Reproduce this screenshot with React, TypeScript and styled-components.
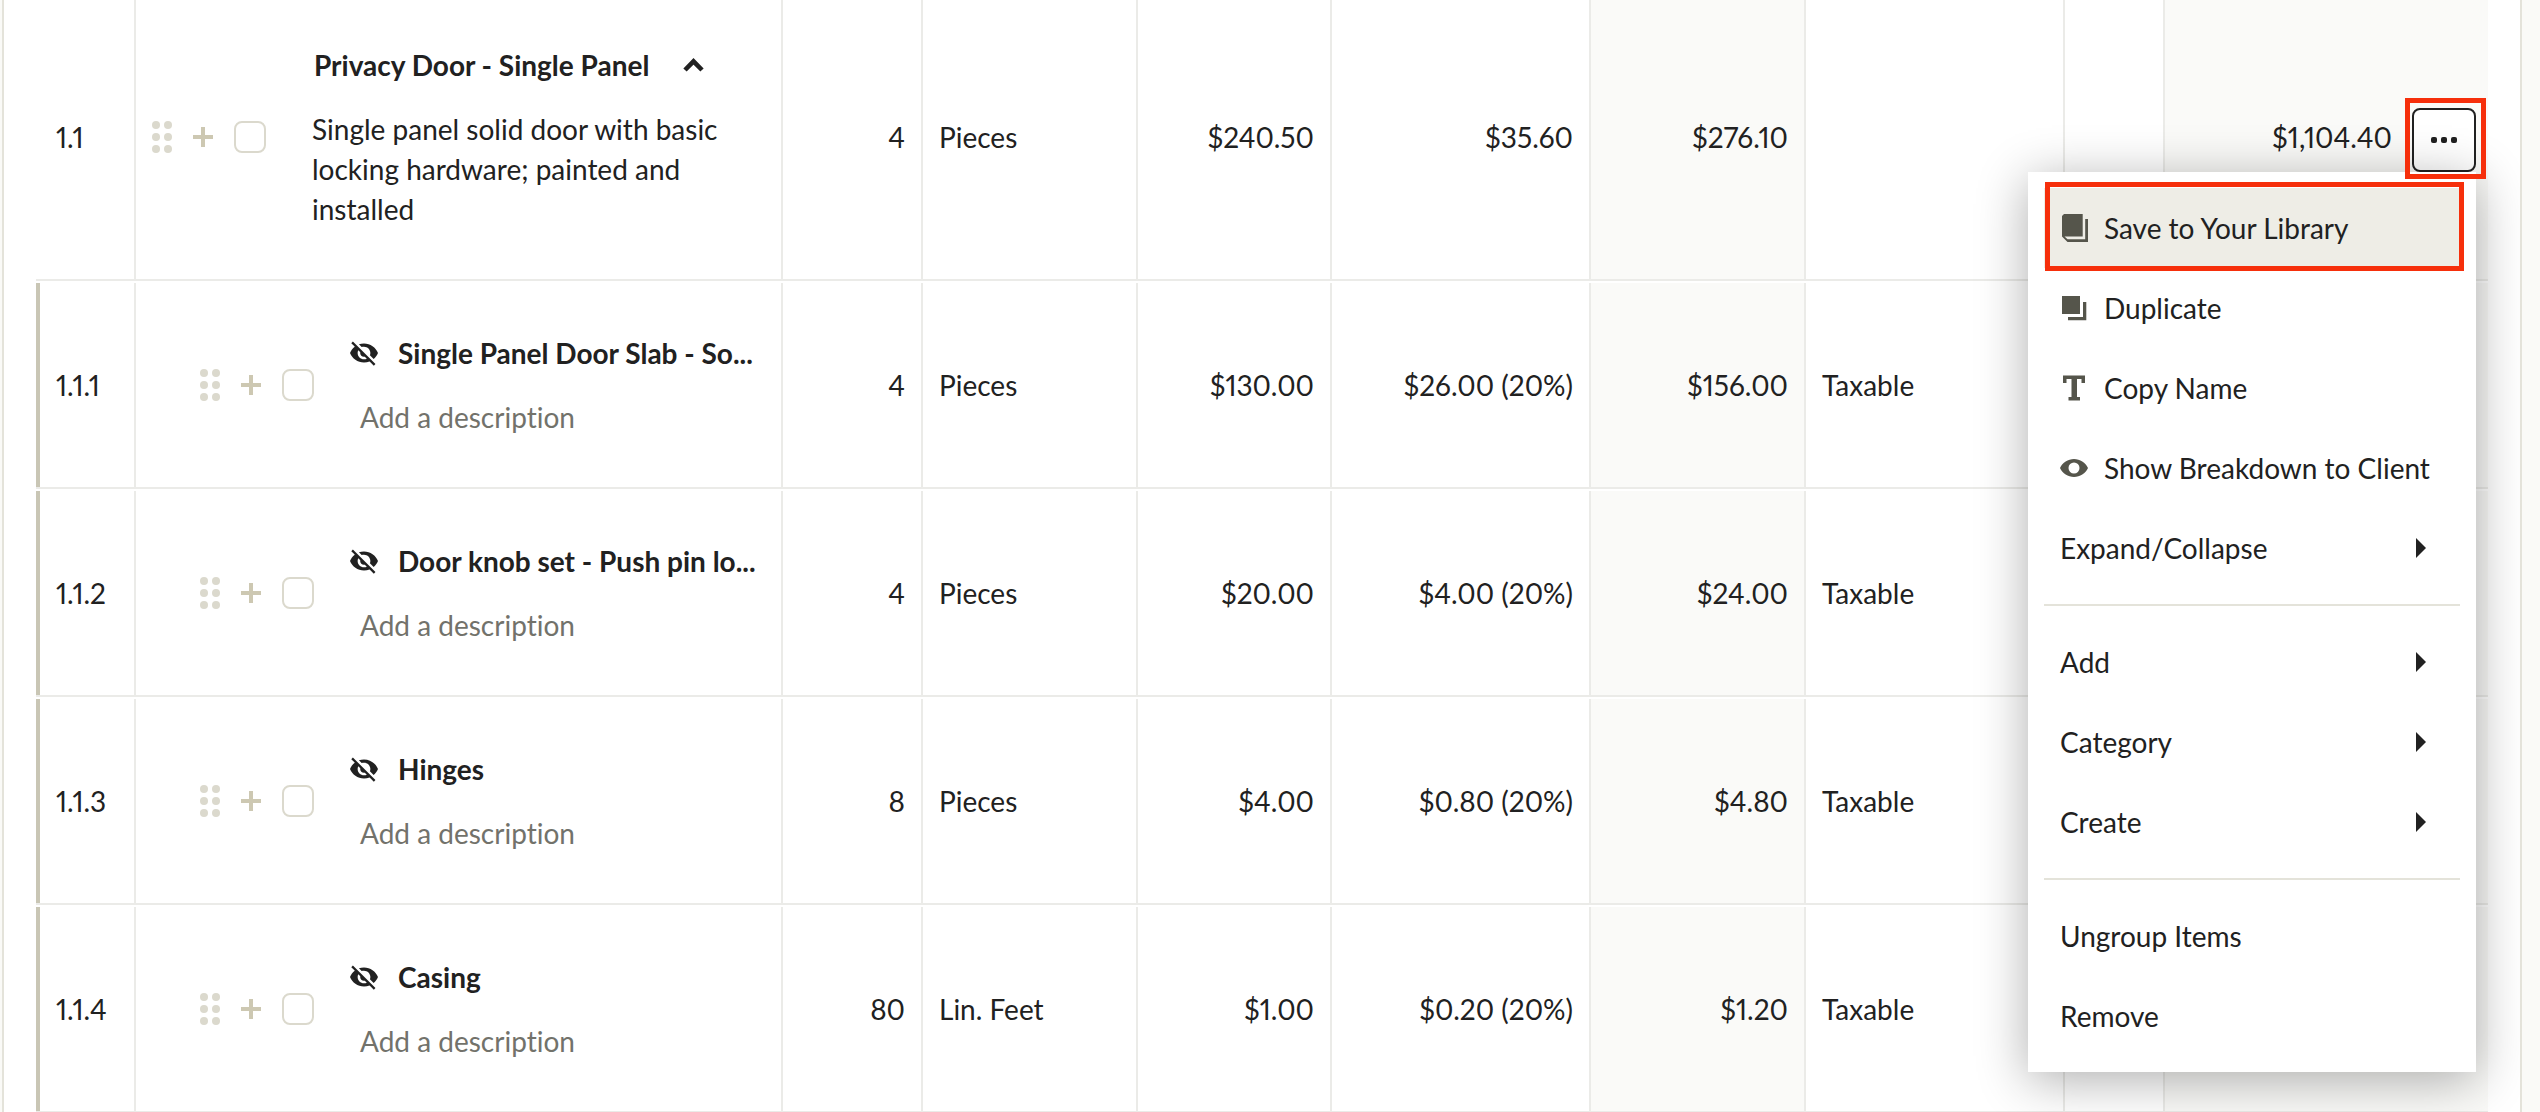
import React from 'react';
import styled, { createGlobalStyle } from 'styled-components';

const color = {
  page: '#fafaf7',
  sheet: '#ffffff',
  ink: '#212121',
  muted: '#72726b',
  icon: '#55554b',
  frame: '#e4e3da',
  grid: '#ebebe8',
  accent: '#c9c6b5',
  handle: '#dbd9cd',
  plus: '#cdc8b2',
  shade: '#fafaf8',
  hover: '#eeede6',
  mark: '#f62f0b',
};

const GlobalStyle = createGlobalStyle`
  *, *::before, *::after { box-sizing: border-box; }
  body {
    margin: 0;
    background: ${color.page};
    color: ${color.ink};
    font: 400 28px/40px Lato, "Liberation Sans", sans-serif;
    font-variant-ligatures: none;
    font-variant-numeric: proportional-nums;
  }
  button {
    margin: 0;
    padding: 0;
    border: 0;
    background: none;
    color: inherit;
    font: inherit;
    font-variant-ligatures: none;
    text-align: left;
    cursor: pointer;
  }
  svg { display: block; flex: none; }
`;

const Sheet = styled.main`
  height: 100vh;
  margin: 0 18px 0 2px;
  padding: 0 32px;
  overflow: hidden;
  background: ${color.sheet};
  border: solid ${color.frame};
  border-width: 0 2px;
`;

const Table = styled.table`
  width: 100%;
  margin-top: -7px;
  table-layout: fixed;
  border-collapse: separate;
  border-spacing: 0 2px;
`;

const Col = styled.col<{ $w?: number }>`
  width: ${(p) => (p.$w ? `${p.$w}px` : 'auto')};
`;

const Row = styled.tr<{ $child?: boolean }>`
  height: ${(p) => (p.$child ? 206 : 286)}px;

  > td:first-child {
    padding-left: 20px;
    box-shadow: ${(p) => (p.$child ? `inset 4px 0 0 ${color.accent}` : 'none')};
  }
`;

const Cell = styled.td<{ $right?: boolean; $shade?: boolean }>`
  padding: 0 16px;
  vertical-align: middle;
  white-space: nowrap;
  text-align: ${(p) => (p.$right ? 'right' : 'left')};
  background: ${(p) => (p.$shade ? color.shade : 'transparent')};
  border: solid ${color.grid};
  border-width: 0 2px 2px 0;

  &:last-child { border-right: 0; padding-right: 12px; }
`;

const Item = styled.div<{ $child?: boolean }>`
  display: flex;
  align-items: center;
  padding-left: ${(p) => (p.$child ? 48 : 0)}px;
`;

const Tools = styled.div`
  display: flex;
  align-items: center;
  gap: 21px;
  margin-right: 36px;
`;

const Tick = styled.input`
  appearance: none;
  width: 32px;
  height: 32px;
  margin: 0;
  border: 2px solid ${color.handle};
  border-radius: 8px;
  background: #fff;
`;

const Texts = styled.div<{ $child?: boolean }>`
  flex: 1;
  min-width: 0;
  display: flex;
  flex-direction: column;
  align-items: flex-start;
  gap: 24px;
  padding-left: ${(p) => (p.$child ? 0 : 10)}px;
`;

const Title = styled.div<{ $child?: boolean }>`
  display: flex;
  align-items: center;
  gap: ${(p) => (p.$child ? 20 : 34)}px;
  padding-left: ${(p) => (p.$child ? 0 : 2)}px;
  font-weight: 700;
`;

const Description = styled.p`
  margin: 0;
  white-space: normal;
`;

const AddDescription = styled.button`
  && { color: ${color.muted}; margin-left: 10px; }
`;

const Total = styled.div`
  display: flex;
  align-items: center;
  justify-content: flex-end;
  gap: 20px;
`;

const MenuAnchor = styled.div`
  position: relative;
`;

const MoreButton = styled.button`
  && {
    display: grid;
    place-items: center;
    width: 64px;
    height: 64px;
    margin-top: 6px;
    background: #fff;
    border: 2px solid ${color.ink};
    border-radius: 8px;
  }
`;

const ButtonMark = styled.span`
  position: absolute;
  inset: -4px -10px -7px -7px;
  z-index: 2;
  border: 5px solid ${color.mark};
  pointer-events: none;
`;

const Menu = styled.div`
  position: absolute;
  top: 100%;
  right: 0;
  z-index: 1;
  width: 448px;
  padding: 16px;
  background: #fff;
  box-shadow: 0 8px 48px rgba(0, 0, 0, 0.32);
`;

const MenuItem = styled.button<{ $active?: boolean }>`
  && {
    position: relative;
    display: flex;
    align-items: center;
    gap: 16px;
    width: 100%;
    height: 80px;
    padding: 0 34px 0 16px;
    background: ${(p) => (p.$active ? color.hover : 'transparent')};
  }
`;

const MenuLabel = styled.span`
  flex: 1;
  white-space: nowrap;
`;

const ItemMark = styled.span`
  position: absolute;
  inset: -6px -4px -3px 1px;
  border: 5px solid ${color.mark};
  pointer-events: none;
`;

const Divider = styled.hr`
  height: 2px;
  margin: 16px 0;
  border: 0;
  background: ${color.frame};
`;

const DragIcon = () => (
  <svg width="20" height="32" fill={color.handle}>
    {[4, 16, 28].map((y) => (
      <React.Fragment key={y}>
        <circle cx="4" cy={y} r="4" />
        <circle cx="16" cy={y} r="4" />
      </React.Fragment>
    ))}
  </svg>
);

const PlusIcon = () => (
  <svg width="20" height="20" fill={color.plus}>
    <path d="M8 0h4v8h8v4h-8v8H8v-8H0V8h8z" />
  </svg>
);

const ChevronUp = () => (
  <svg width="21" height="14" fill="none" stroke={color.ink} strokeWidth="4.6">
    <path d="M2 12l8.5-8.7L19 12" />
  </svg>
);

const HiddenIcon = () => (
  <svg width="28" height="28" viewBox="1 1 22 22" fill={color.ink}>
    <path d="M12 7c2.76 0 5 2.24 5 5 0 .65-.13 1.26-.36 1.83l2.92 2.92c1.51-1.26 2.7-2.89 3.43-4.75-1.73-4.39-6-7.5-11-7.5-1.4 0-2.74.25-3.98.7l2.16 2.16C10.74 7.13 11.35 7 12 7zM2 4.27l2.28 2.28.46.46C3.08 8.3 1.78 10.02 1 12c1.73 4.39 6 7.5 11 7.5 1.55 0 3.03-.3 4.38-.84l.42.42L19.73 22 21 20.73 3.27 3 2 4.27zM7.53 9.8l1.55 1.55c-.05.21-.08.43-.08.65 0 1.66 1.34 3 3 3 .22 0 .44-.03.65-.08l1.55 1.55c-.67.33-1.41.53-2.2.53-2.76 0-5-2.24-5-5 0-.79.2-1.53.53-2.2z" />
  </svg>
);

const DotsIcon = () => (
  <svg width="26" height="6" fill={color.ink}>
    <rect width="6" height="6" rx="2" />
    <rect x="10" width="6" height="6" rx="2" />
    <rect x="20" width="6" height="6" rx="2" />
  </svg>
);

const LibraryIcon = () => (
  <svg width="28" height="28" fill={color.icon}>
    <path d="M4 0h18.7v22.5H4.5l3 2.7h17.7V5H28v23H7.500L2 22.500V2z" />
  </svg>
);

const DuplicateIcon = () => (
  <svg width="28" height="28" fill={color.icon}>
    <path d="M2 2h18v18H2zM23 8h3.300v18.200H8V23h15z" />
  </svg>
);

const TypeIcon = () => (
  <svg width="28" height="28" fill={color.icon}>
    <path d="M3 1.500h22v7.500h-3.500V5H17v18h3v3.500H8.500V23h3V5H6.500v4H3z" />
  </svg>
);

const EyeIcon = () => (
  <svg width="28" height="28" fill={color.icon} fillRule="evenodd">
    <path d="M0 14C2.500 8.500 8 5 14 5s11.500 3.500 14 9c-2.500 5.500-8 9-14 9S2.500 19.500 0 14zM14 8.500a5.500 5.500 0 1 0 0 11 5.500 5.500 0 0 0 0-11z" />
  </svg>
);

const SubmenuArrow = () => (
  <svg width="10" height="20" fill={color.ink}>
    <path d="M0 0l10 10L0 20z" />
  </svg>
);

const menuGroups: { label: string; icon?: React.ReactNode; sub?: boolean }[][] = [
  [
    { label: 'Save to Your Library', icon: <LibraryIcon /> },
    { label: 'Duplicate', icon: <DuplicateIcon /> },
    { label: 'Copy Name', icon: <TypeIcon /> },
    { label: 'Show Breakdown to Client', icon: <EyeIcon /> },
    { label: 'Expand/Collapse', sub: true },
  ],
  [
    { label: 'Add', sub: true },
    { label: 'Category', sub: true },
    { label: 'Create', sub: true },
  ],
  [{ label: 'Ungroup Items' }, { label: 'Remove' }],
];

const children = [
  { no: '1.1.1', name: 'Single Panel Door Slab - So...', qty: '4', unit: 'Pieces', cost: '$130.00', markup: '$26.00 (20%)', price: '$156.00' },
  { no: '1.1.2', name: 'Door knob set - Push pin lo...', qty: '4', unit: 'Pieces', cost: '$20.00', markup: '$4.00 (20%)', price: '$24.00' },
  { no: '1.1.3', name: 'Hinges', qty: '8', unit: 'Pieces', cost: '$4.00', markup: '$0.80 (20%)', price: '$4.80' },
  { no: '1.1.4', name: 'Casing', qty: '80', unit: 'Lin. Feet', cost: '$1.00', markup: '$0.20 (20%)', price: '$1.20' },
];

const RowTools = ({ no }: { no: string }) => (
  <Tools>
    <button type="button" aria-label={`Move ${no}`}><DragIcon /></button>
    <button type="button" aria-label={`Add below ${no}`}><PlusIcon /></button>
    <Tick type="checkbox" aria-label={`Select ${no}`} />
  </Tools>
);

const RowMenu = () => (
  <MenuAnchor>
    <MoreButton type="button" aria-label="More actions" aria-expanded="true">
      <DotsIcon />
    </MoreButton>
    <ButtonMark />
    <Menu role="menu">
      {menuGroups.map((group, g) => (
        <React.Fragment key={g}>
          {g > 0 && <Divider />}
          {group.map((item, i) => {
            const active = g === 0 && i === 0;
            return (
              <MenuItem key={item.label} type="button" role="menuitem" $active={active}>
                {item.icon}
                <MenuLabel>{item.label}</MenuLabel>
                {item.sub && <SubmenuArrow />}
                {active && <ItemMark />}
              </MenuItem>
            );
          })}
        </React.Fragment>
      ))}
    </Menu>
  </MenuAnchor>
);

export default function App() {
  return (
    <>
      <GlobalStyle />
      <Sheet>
        <Table>
          <colgroup>
            <Col $w={100} />
            <Col />
            <Col $w={140} />
            <Col $w={215} />
            <Col $w={194} />
            <Col $w={259} />
            <Col $w={215} />
            <Col $w={259} />
            <Col $w={100} />
            <Col $w={323} />
          </colgroup>
          <tbody>
            <Row>
              <Cell>1.1</Cell>
              <Cell>
                <Item>
                  <RowTools no="1.1" />
                  <Texts>
                    <Title>
                      Privacy Door - Single Panel
                      <button type="button" aria-label="Collapse group"><ChevronUp /></button>
                    </Title>
                    <Description>
                      Single panel solid door with basic locking hardware; painted and installed
                    </Description>
                  </Texts>
                </Item>
              </Cell>
              <Cell $right>4</Cell>
              <Cell>Pieces</Cell>
              <Cell $right>$240.50</Cell>
              <Cell $right>$35.60</Cell>
              <Cell $right $shade>$276.10</Cell>
              <Cell />
              <Cell />
              <Cell $shade>
                <Total>
                  $1,104.40
                  <RowMenu />
                </Total>
              </Cell>
            </Row>
            {children.map((row) => (
              <Row key={row.no} $child>
                <Cell>{row.no}</Cell>
                <Cell>
                  <Item $child>
                    <RowTools no={row.no} />
                    <Texts $child>
                      <Title $child>
                        <HiddenIcon />
                        {row.name}
                      </Title>
                      <AddDescription type="button">Add a description</AddDescription>
                    </Texts>
                  </Item>
                </Cell>
                <Cell $right>{row.qty}</Cell>
                <Cell>{row.unit}</Cell>
                <Cell $right>{row.cost}</Cell>
                <Cell $right>{row.markup}</Cell>
                <Cell $right $shade>{row.price}</Cell>
                <Cell>Taxable</Cell>
                <Cell />
                <Cell $shade />
              </Row>
            ))}
          </tbody>
        </Table>
      </Sheet>
    </>
  );
}
